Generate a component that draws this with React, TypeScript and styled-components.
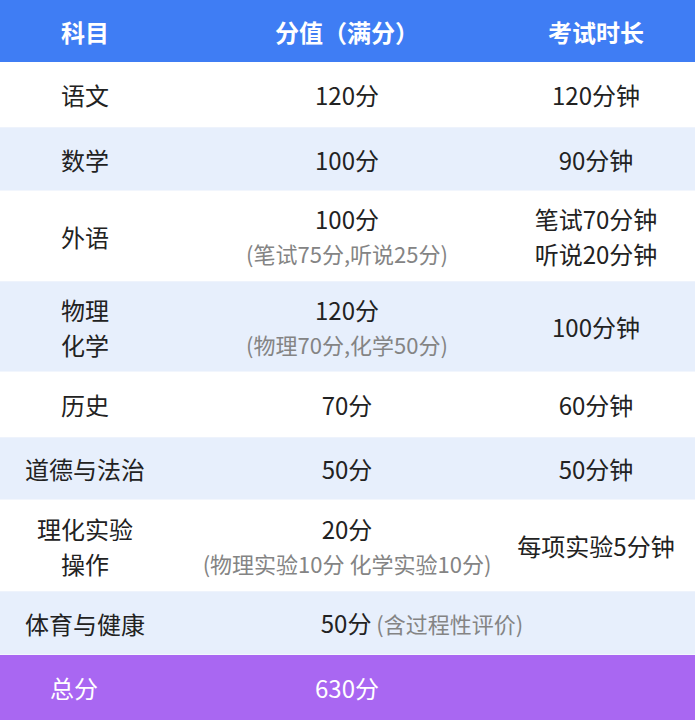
import React from 'react'
import styled, { createGlobalStyle } from 'styled-components'

const GlobalStyle = createGlobalStyle`
  html, body {
    margin: 0;
    padding: 0;
    background: #ffffff;
  }
  body {
    font-family: "Noto Sans CJK SC", "Noto Sans", sans-serif;
    -webkit-font-smoothing: antialiased;
  }
`

type Row = {
  subject: string[]
  score: string
  scoreNote?: string
  time?: string[]
  merged?: boolean
  height: number
}

const rows: Row[] = [
  { subject: ['语文'], score: '120分', time: ['120分钟'], height: 66 },
  { subject: ['数学'], score: '100分', time: ['90分钟'], height: 63 },
  { subject: ['外语'], score: '100分', scoreNote: '(笔试75分,听说25分)', time: ['笔试70分钟', '听说20分钟'], height: 91 },
  { subject: ['物理', '化学'], score: '120分', scoreNote: '(物理70分,化学50分)', time: ['100分钟'], height: 90 },
  { subject: ['历史'], score: '70分', time: ['60分钟'], height: 66 },
  { subject: ['道德与法治'], score: '50分', time: ['50分钟'], height: 62 },
  { subject: ['理化实验', '操作'], score: '20分', scoreNote: '(物理实验10分 化学实验10分)', time: ['每项实验5分钟'], height: 92 },
  { subject: ['体育与健康'], score: '50分', scoreNote: '(含过程性评价)', merged: true, height: 63 },
]

const ScoreTable: React.FC = () => {
  return (
    <Table>
      <HeaderRow>
        <HeadCell>科目</HeadCell>
        <HeadCell>分值（满分）</HeadCell>
        <HeadCell $last>考试时长</HeadCell>
      </HeaderRow>
      {rows.map((row, i) => (
        <BodyRow key={row.subject.join('')} $striped={i % 2 === 1} style={{ height: row.height }}>
          <Cell>
            {row.subject.map((line) => (
              <Line key={line}>{line}</Line>
            ))}
          </Cell>
          {row.merged ? (
            <MergedCell>
              <Line>
                {row.score}
                <Note> {row.scoreNote}</Note>
              </Line>
            </MergedCell>
          ) : (
            <>
              <Cell>
                <Line>{row.score}</Line>
                {row.scoreNote && <NoteLine>{row.scoreNote}</NoteLine>}
              </Cell>
              <Cell $last>
                {row.time?.map((line) => (
                  <Line key={line}>{line}</Line>
                ))}
              </Cell>
            </>
          )}
        </BodyRow>
      ))}
      <TotalRow>
        <TotalLabel>总分</TotalLabel>
        <TotalValue>630分</TotalValue>
      </TotalRow>
    </Table>
  )
}

const App: React.FC = () => (
  <>
    <GlobalStyle />
    <ScoreTable />
  </>
)

const Table = styled.div`
  width: 695px;
  display: flex;
  flex-direction: column;
`

const gridCols = `
  display: grid;
  grid-template-columns: 170px 354px minmax(0, 1fr);
  align-items: center;
`

const HeaderRow = styled.div`
  ${gridCols}
  height: 62px;
  background: #3f7df4;
`

const HeadCell = styled.div<{ $last?: boolean }>`
  text-align: center;
  color: #ffffff;
  font-size: 24px;
  font-weight: 700;
  line-height: 35px;
  white-space: nowrap;
  padding-right: ${({ $last }) => ($last ? '27px' : '0')};
`

const BodyRow = styled.div<{ $striped?: boolean }>`
  ${gridCols}
  box-sizing: border-box;
  background: ${({ $striped }) => ($striped ? '#e7effc' : '#ffffff')};
  border-bottom: 1px solid ${({ $striped }) => ($striped ? '#f2f6fd' : '#eef3fc')};
`

const Cell = styled.div<{ $last?: boolean }>`
  display: flex;
  flex-direction: column;
  align-items: center;
  color: #222222;
  font-size: 24px;
  white-space: nowrap;
  padding-right: ${({ $last }) => ($last ? '27px' : '0')};
`

const MergedCell = styled(Cell)`
  grid-column: 2 / 4;
  padding-right: 21px;
`

const Line = styled.div`
  line-height: 35px;
`

const NoteLine = styled.div`
  line-height: 35px;
  font-size: 22px;
  color: #848484;
`

const Note = styled.span`
  font-size: 22px;
  color: #848484;
`

const TotalRow = styled.div`
  ${gridCols}
  height: 65px;
  background: #a967f2;
  color: #ffffff;
  font-size: 24px;
`

const TotalLabel = styled.div`
  text-align: center;
  padding-right: 22px;
`

const TotalValue = styled.div`
  text-align: center;
`

export default App
